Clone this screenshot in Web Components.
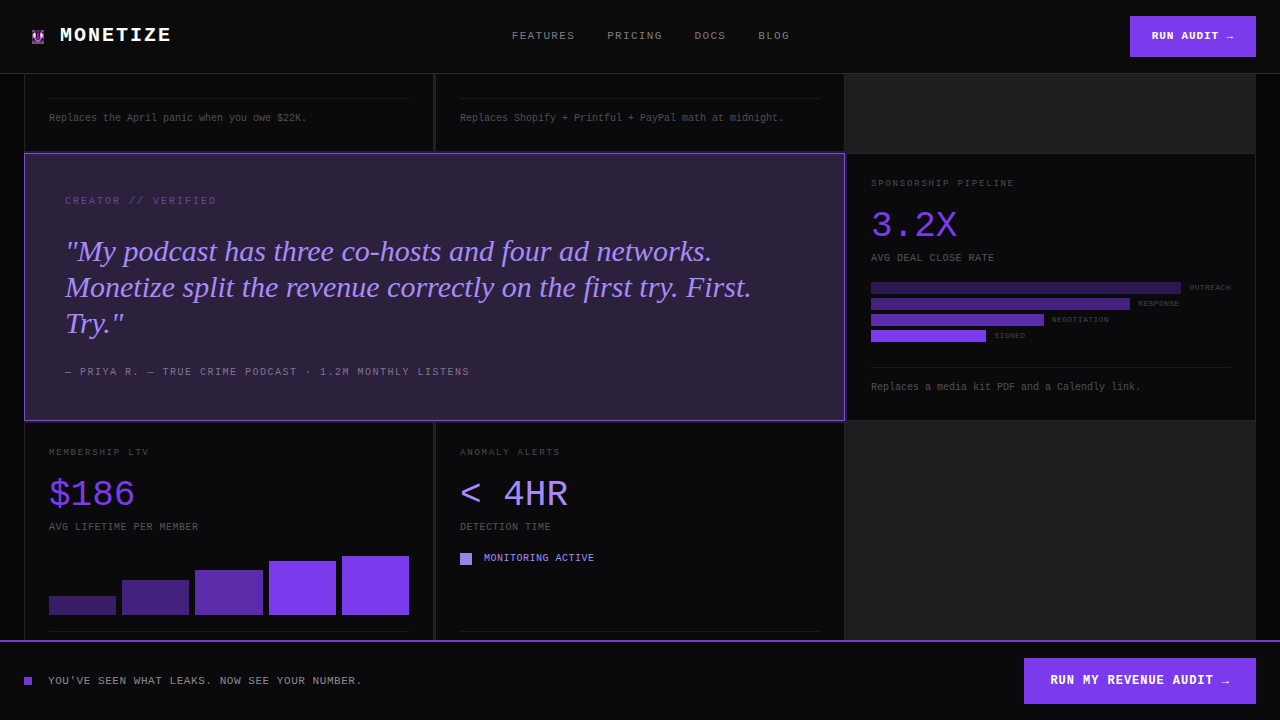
<!DOCTYPE html>
<html lang="en">
<head>
<meta charset="utf-8">
<meta name="viewport" content="width=device-width, initial-scale=1">
<title>Monetize</title>
<style>
  :root {
    --ink: #0a0a0c;
    --line: #242426;
    --panel: #1e1e20;
    --violet: #7c3aed;
    --lilac: #a78bfa;
    --dim: #4c4c4e;
  }
  html, body { height: 100%; }
  body {
    margin: 0;
    background: #060608;
    color: #fff;
    font-family: "Liberation Mono", monospace;
  }
</style>
</head>
<body>
<mz-app>
  <mz-header slot="header"></mz-header>
  <mz-bento>
    <mz-card class="first" note="Replaces the April panic when you owe $22K."></mz-card>
    <mz-card class="first" note="Replaces Shopify + Printful + PayPal math at midnight."></mz-card>
    <mz-quote>
      <span slot="label">CREATOR // VERIFIED</span>
      "My podcast has three co-hosts and four ad networks. Monetize split the revenue correctly on the first try. First. Try."
      <span slot="author">— PRIYA R. — TRUE CRIME PODCAST · 1.2M MONTHLY LISTENS</span>
    </mz-quote>
    <mz-card class="last-col" label="SPONSORSHIP PIPELINE" value="3.2X" sub="AVG DEAL CLOSE RATE" note="Replaces a media kit PDF and a Calendly link.">
      <mz-funnel></mz-funnel>
    </mz-card>
    <mz-card label="MEMBERSHIP LTV" value="$186" sub="AVG LIFETIME PER MEMBER" note="Replaces a cohort spreadsheet.">
      <mz-bars></mz-bars>
    </mz-card>
    <mz-card class="soft" label="ANOMALY ALERTS" value="&lt; 4HR" sub="DETECTION TIME" note="Replaces finding out a month later.">
      <mz-status>MONITORING ACTIVE</mz-status>
    </mz-card>
  </mz-bento>
  <mz-cta slot="footer"></mz-cta>
</mz-app>

<script>
  const define = (name, html, setup) => {
    const template = document.createElement('template');
    template.innerHTML = html;
    customElements.define(name, class extends HTMLElement {
      constructor() {
        super();
        this.attachShadow({ mode: 'open' }).append(template.content.cloneNode(true));
      }
      connectedCallback() { if (setup) setup(this, this.shadowRoot); }
    });
  };

  define('mz-app', `
    <style>
      :host { display: flex; flex-direction: column; height: 100vh; }
      main { flex: 1; min-height: 0; overflow: hidden; padding: 0 24px; }
    </style>
    <slot name="header"></slot>
    <main><slot></slot></main>
    <slot name="footer"></slot>`);

  define('mz-button', `
    <style>
      :host { display: block; }
      button {
        display: block; margin: 0; border: 0; border-radius: 0;
        padding: 14px 22px; background: var(--violet); color: #fff;
        font: bold 11px/13px "Liberation Mono", monospace;
        letter-spacing: 0.08em; white-space: nowrap; cursor: pointer;
      }
      :host([large]) button { padding: 16px 26px; font-size: 12px; line-height: 14px; }
    </style>
    <button type="button"><slot></slot></button>`);

  define('mz-logo', `
    <style>
      :host { display: flex; width: 28px; height: 28px; align-items: center; justify-content: center; }
      svg { display: block; }
    </style>
    <svg width="14" height="14" viewBox="0 0 14 14" aria-hidden="true">
      <rect x="1" width="12" height="14" fill="#6b5670"/>
      <path d="M1 2h2v2H1zM11 2h2v2h-2zM1 9h2v2H1zM11 9h2v2h-2zM4 0h1v2H4zM9 0h1v2H9z" fill="#352238"/>
      <path d="M5 0h4v11H5zM3 9h8v3H3z" fill="#5c1470"/>
      <path d="M5 2h1v5H5zM8 2h1v5H8zM2 8h1v2H2zM11 8h1v2h-1z" fill="#1d0a22"/>
      <path d="M2 3h3v5H2zM9 3h3v5H9z" fill="#8a3a99"/>
      <path d="M3 3h1l1 2-1 3H3L2 5zM10 3h1l1 2-1 3h-1L9 5z" fill="#f0d9f5"/>
      <path d="M4 8h1l1 2h2l1-2h1v2l-2 2H6L4 10z" fill="#b45cc4"/>
      <path d="M6 3h2v6H6z" fill="#8c1fa3"/>
    </svg>`);

  define('mz-header', `
    <style>
      :host { display: block; background: #0b0b0b; border-bottom: 1px solid #2a2a2c; }
      header { display: flex; align-items: center; justify-content: space-between; padding: 16px 24px; }
      .brand { display: flex; align-items: center; gap: 8px; color: #fff; text-decoration: none; }
      .name { font-size: 20px; line-height: 24px; font-weight: bold; letter-spacing: 0.1em; margin-bottom: 2px; }
      nav { display: flex; gap: 32px; }
      nav a { color: #7d7d7f; font-size: 11px; line-height: 13px; letter-spacing: 0.12em; text-decoration: none; }
    </style>
    <header>
      <a class="brand" href="#"><mz-logo></mz-logo><span class="name">MONETIZE</span></a>
      <nav>
        <a href="#features">FEATURES</a><a href="#pricing">PRICING</a><a href="#docs">DOCS</a><a href="#blog">BLOG</a>
      </nav>
      <mz-button>RUN AUDIT →</mz-button>
    </header>`);

  define('mz-bento', `
    <style>
      :host {
        display: grid; grid-template-columns: repeat(3, minmax(0, 1fr)); gap: 1px;
        background: var(--panel); overflow: hidden;
      }
      ::slotted(.last-col) { grid-column: 3; }
    </style>
    <slot></slot>`);

  define('mz-card', `
    <style>
      :host {
        display: flex; flex-direction: column; box-sizing: border-box;
        padding: 24px; background: var(--ink); border: 1px solid var(--line);
      }
      :host(.first) { border-top: 0; }
      :host(.first) .head { display: none; }
      .head { margin-bottom: 16px; }
      .label { color: var(--dim); font-size: 9px; line-height: 12px; letter-spacing: 0.2em; margin-bottom: 18px; }
      .value { color: var(--violet); font-size: 36px; line-height: 38px; margin-bottom: 6px; }
      :host(.soft) .value { color: var(--lilac); }
      .sub { color: #555557; font-size: 10px; line-height: 14px; letter-spacing: 0.05em; }
      .body { margin-bottom: 16px; }
      :host(.first) .body { margin: 0; }
      .note {
        margin-top: auto; padding-top: 12px; border-top: 1px solid #1a1a1c;
        color: #505052; font-size: 10px; line-height: 16px;
      }
    </style>
    <div class="head">
      <div class="label"></div>
      <div class="value"></div>
      <div class="sub"></div>
    </div>
    <div class="body"><slot></slot></div>
    <div class="note"></div>`,
    (host, root) => {
      for (const key of ['label', 'value', 'sub', 'note'])
        root.querySelector('.' + key).textContent = host.getAttribute(key) || '';
    });

  define('mz-quote', `
    <style>
      :host {
        display: block; grid-column: span 2; box-sizing: border-box; position: relative;
        padding: 40px 40px 39px; background: #2c213d; border: 1px solid #7750c4;
        box-shadow: 0 0 0 2px #26193f, inset 0 0 0 2px #30204a;
      }
      figure, blockquote { margin: 0; }
      .label { color: #5f4a9c; font-size: 10px; line-height: 16px; letter-spacing: 0.2em; margin-bottom: 23px; }
      blockquote {
        color: var(--lilac); font: italic 30px/36px "Liberation Serif", serif; margin-bottom: 24px;
      }
      figcaption { color: #7f7789; font-size: 10px; line-height: 16px; letter-spacing: 0.15em; }
    </style>
    <figure>
      <div class="label"><slot name="label"></slot></div>
      <blockquote><slot></slot></blockquote>
      <figcaption><slot name="author"></slot></figcaption>
    </figure>`);

  define('mz-funnel', `
    <style>
      :host { display: flex; flex-direction: column; gap: 4px; }
      .row { display: flex; align-items: center; gap: 8px; height: 12px; }
      .bar { height: 12px; background: var(--violet); }
      .row span { color: #454547; font-size: 8px; line-height: 10px; letter-spacing: 0.05em; }
    </style>
    <div class="row"><div class="bar" style="width:100%;opacity:.3"></div><span>OUTREACH</span></div>
    <div class="row"><div class="bar" style="width:72%;opacity:.5"></div><span>RESPONSE</span></div>
    <div class="row"><div class="bar" style="width:48%;opacity:.7"></div><span>NEGOTIATION</span></div>
    <div class="row"><div class="bar" style="width:32%"></div><span>SIGNED</span></div>`);

  define('mz-bars', `
    <style>
      :host { display: flex; align-items: flex-end; gap: 6px; height: 64px; }
      div { flex: 1; background: var(--violet); }
    </style>
    <div style="height:30%;opacity:.4"></div>
    <div style="height:55%;opacity:.5"></div>
    <div style="height:70%;opacity:.7"></div>
    <div style="height:85%"></div>
    <div style="height:92%"></div>`);

  define('mz-status', `
    <style>
      :host {
        display: flex; align-items: center; gap: 12px; height: 16px;
        color: var(--lilac); font-size: 10px; line-height: 16px; letter-spacing: 0.05em;
      }
      i { width: 12px; height: 12px; background: #9a82e6; }
    </style>
    <i></i><span><slot></slot></span>`);

  define('mz-cta', `
    <style>
      :host { display: block; background: var(--ink); border-top: 2px solid #7440c8; }
      footer { display: flex; align-items: center; justify-content: space-between; padding: 16px 24px; }
      .text { display: flex; align-items: center; gap: 16px; color: #8a8a8c; font-size: 11px; line-height: 13px; letter-spacing: 0.05em; }
      i { width: 8px; height: 8px; background: #6f3ad0; }
    </style>
    <footer>
      <div class="text"><i></i><span>YOU'VE SEEN WHAT LEAKS. NOW SEE YOUR NUMBER.</span></div>
      <mz-button large>RUN MY REVENUE AUDIT →</mz-button>
    </footer>`);
</script>
</body>
</html>
